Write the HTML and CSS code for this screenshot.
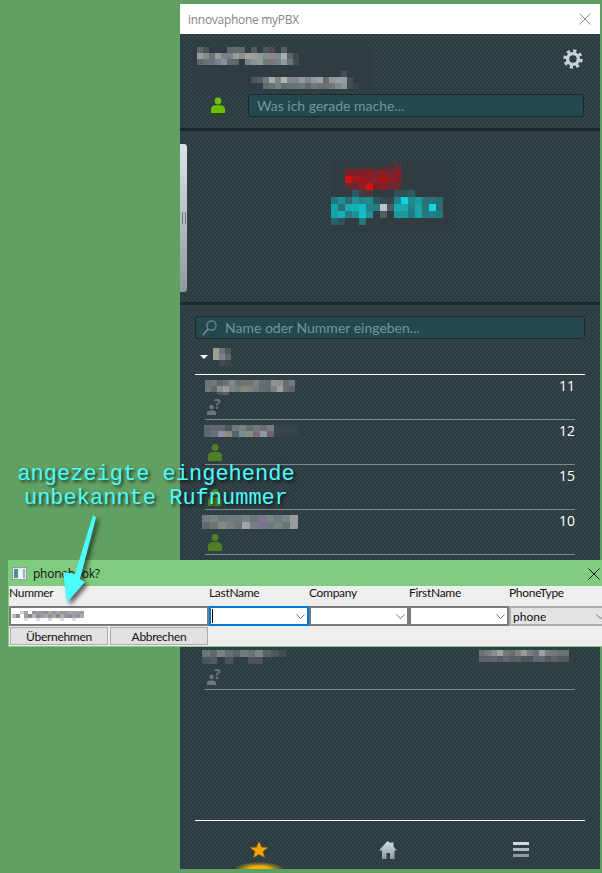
FILE: index.html
```html
<!DOCTYPE html>
<html lang="de">
<head>
<meta charset="utf-8">
<title>innovaphone myPBX</title>
<link rel="stylesheet" href="styles.css">
</head>
<body>
<main class="window">
  <div class="titlebar">
    <span class="title">innovaphone myPBX</span>
    <svg class="close" width="12" height="12" viewBox="0 0 12 12"><path d="M.5.5l11 11M11.5.5l-11 11" stroke="#8a8a8a" fill="none"/></svg>
  </div>

  <section class="profile">
    <div class="profile-top">
      <svg class="mosaic profile-name" width="180" height="43" viewBox="0 0 30 7.17">
        <rect class="back" x=".2" width="29.8" height="7.17" fill="#303c41"/>
        <rect x="1" y="0" fill="#5d666a"/><rect x="2" y="0" fill="#4a5559"/><rect x="6" y="0" fill="#5f696c"/><rect x="7" y="0" fill="#636b6e"/><rect x="8" y="0" fill="#606a6c"/><rect x="10" y="0" fill="#515b5f"/><rect x="12" y="0" fill="#4a5a60"/><rect x="13" y="0" fill="#544a4e"/><rect x="15" y="0" fill="#555e62"/>
        <rect x="1" y="1" fill="#9a9c9d"/><rect x="2" y="1" fill="#858a8c"/><rect x="3" y="1" fill="#6b7477"/><rect x="4" y="1" fill="#9c9a94"/><rect x="5" y="1" fill="#7a8092"/><rect x="6" y="1" fill="#78807e"/><rect x="7" y="1" fill="#9a9d9b"/><rect x="8" y="1" fill="#8b8e8c"/><rect x="9" y="1" fill="#a0a3a1"/><rect x="10" y="1" fill="#9aa19c"/><rect x="11" y="1" fill="#8f9894"/><rect x="12" y="1" fill="#808e92"/><rect x="13" y="1" fill="#8d8589"/><rect x="14" y="1" fill="#7f8a8c"/><rect x="15" y="1" fill="#a5b0b4"/><rect x="16" y="1" fill="#5b6467"/><rect x="17" y="1" fill="#3f4a4d"/>
        <rect x="1" y="2" fill="#5f6868"/><rect x="2" y="2" fill="#6d7072"/><rect x="3" y="2" fill="#68737c"/><rect x="4" y="2" fill="#7a8190"/><rect x="5" y="2" fill="#8a8f9a"/><rect x="6" y="2" fill="#62696a"/><rect x="7" y="2" fill="#5e6566"/><rect x="9" y="2" fill="#7d8485"/><rect x="10" y="2" fill="#8c9394"/><rect x="11" y="2" fill="#8f9893"/><rect x="12" y="2" fill="#70797c"/><rect x="13" y="2" fill="#79787a"/><rect x="14" y="2" fill="#788284"/><rect x="15" y="2" fill="#8d9b9a"/><rect x="16" y="2" fill="#6b7577"/><rect x="17" y="2" fill="#434c4e"/>
        <rect x="25" y="4" fill="#434f52"/>
        <rect x="10" y="5" fill="#4a5558"/><rect x="11" y="5" fill="#556064"/><rect x="12" y="5" fill="#6f7a7c"/><rect x="13" y="5" fill="#a8adab"/><rect x="14" y="5" fill="#7e8687"/><rect x="15" y="5" fill="#b0b5b0"/><rect x="16" y="5" fill="#86888c"/><rect x="17" y="5" fill="#7f8790"/><rect x="18" y="5" fill="#97999a"/><rect x="19" y="5" fill="#7e8890"/><rect x="20" y="5" fill="#8f9a9a"/><rect x="21" y="5" fill="#a0a2a2"/><rect x="22" y="5" fill="#676b66"/><rect x="23" y="5" fill="#8a9a9e"/><rect x="24" y="5" fill="#9aa0a2"/><rect x="25" y="5" fill="#90a0a0"/><rect x="26" y="5" fill="#444c50"/>
        <rect x="12" y="6" fill="#5e6a6d"/><rect x="13" y="6" fill="#6a7376"/><rect x="14" y="6" fill="#79817d"/><rect x="15" y="6" fill="#626e72"/><rect x="16" y="6" fill="#6a7274"/><rect x="17" y="6" fill="#66717a"/><rect x="18" y="6" fill="#6f7674"/><rect x="19" y="6" fill="#5e696c"/><rect x="20" y="6" fill="#72787a"/><rect x="21" y="6" fill="#6a7276"/><rect x="22" y="6" fill="#687072"/><rect x="23" y="6" fill="#70787a"/><rect x="24" y="6" fill="#808a8c"/><rect x="25" y="6" fill="#88969c"/><rect x="26" y="6" fill="#434b4f"/><rect x="27" y="6" fill="#3c4246"/>
      </svg>
      <svg class="gear" width="20" height="20" viewBox="0 0 20 20"><circle cx="10" cy="10" r="8" fill="none" stroke="#c9d2d5" stroke-width="3.4" stroke-dasharray="3.1 3.18"/><circle cx="10" cy="10" r="5.4" fill="none" stroke="#c9d2d5" stroke-width="3.4"/></svg>
    </div>
    <div class="status-row">
      <svg class="status-user" width="14" height="18" viewBox="0 0 14 18"><circle cx="7" cy="4" r="3.4" fill="#6cc000"/><path d="M0 17v-5c0-2 2-3.800 4-3.800h6c2 0 4 1.800 4 3.800v5z" fill="#6cc000"/><rect y="16" width="14" height="2" fill="#2d4a00"/></svg>
      <div class="field status-field">Was ich gerade mache...</div>
    </div>
  </section>

  <section class="stage">
    <div class="handle"><span class="grip"></span></div>
    <svg class="mosaic stage-logo" width="119" height="70" viewBox="0 0 17 10">
      <rect class="back" width="17" height="10" fill="#303c41"/>
      <rect x="8" y="0" fill="#45353a"/><rect x="9" y="0" fill="#55333a"/>
      <rect x="2" y="1" fill="#7e1f26"/><rect x="3" y="1" fill="#7a2028"/><rect x="4" y="1" fill="#7e1f26"/><rect x="5" y="1" fill="#8c1c22"/><rect x="6" y="1" fill="#702832"/><rect x="7" y="1" fill="#951a20"/><rect x="8" y="1" fill="#6a2a32"/><rect x="9" y="1" fill="#8a1c24"/>
      <rect x="2" y="2" fill="#d01212"/><rect x="3" y="2" fill="#9a1a20"/><rect x="4" y="2" fill="#a0181e"/><rect x="5" y="2" fill="#86202a"/><rect x="6" y="2" fill="#8a2028"/><rect x="7" y="2" fill="#a81618"/><rect x="8" y="2" fill="#8a2028"/><rect x="9" y="2" fill="#7e222a"/>
      <rect x="2" y="3" fill="#5f2c34"/><rect x="3" y="3" fill="#66282f"/><rect x="4" y="3" fill="#8a2026"/><rect x="5" y="3" fill="#d81010"/><rect x="6" y="3" fill="#7a2028"/><rect x="7" y="3" fill="#8a1e24"/><rect x="8" y="3" fill="#6a2a30"/><rect x="9" y="3" fill="#6a2a30"/>
      <rect x="3" y="4" fill="#2a5a62"/><rect x="4" y="4" fill="#45383e"/><rect x="5" y="4" fill="#4a363c"/><rect x="9" y="4" fill="#2c5459"/><rect x="10" y="4" fill="#2c5459"/><rect x="11" y="4" fill="#2e5a60"/>
      <rect x="0" y="5" fill="#1f7a80"/><rect x="1" y="5" fill="#1e9096"/><rect x="2" y="5" fill="#2c6a70"/><rect x="3" y="5" fill="#1e9096"/><rect x="4" y="5" fill="#1f8288"/><rect x="5" y="5" fill="#218a8e"/><rect x="6" y="5" fill="#2a5a60"/><rect x="7" y="5" fill="#344a50"/><rect x="8" y="5" fill="#34464c"/><rect x="9" y="5" fill="#1f8086"/><rect x="10" y="5" fill="#12d4dc"/><rect x="11" y="5" fill="#1f8a90"/><rect x="12" y="5" fill="#1a9aa0"/><rect x="13" y="5" fill="#26747a"/><rect x="14" y="5" fill="#26747a"/><rect x="15" y="5" fill="#1f7076"/>
      <rect x="0" y="6" fill="#16a4aa"/><rect x="1" y="6" fill="#2c6e74"/><rect x="2" y="6" fill="#18acb2"/><rect x="3" y="6" fill="#16b0b6"/><rect x="4" y="6" fill="#14bcc2"/><rect x="5" y="6" fill="#228288"/><rect x="6" y="6" fill="#267c82"/><rect x="7" y="6" fill="#c0c4c5"/><rect x="8" y="6" fill="#4a5a60"/><rect x="9" y="6" fill="#16acb2"/><rect x="10" y="6" fill="#18a8ae"/><rect x="11" y="6" fill="#228288"/><rect x="12" y="6" fill="#18a4aa"/><rect x="13" y="6" fill="#28747a"/><rect x="14" y="6" fill="#10d8e0"/><rect x="15" y="6" fill="#2a6a70"/>
      <rect x="0" y="7" fill="#18a0a6"/><rect x="1" y="7" fill="#18b0b6"/><rect x="2" y="7" fill="#227c82"/><rect x="3" y="7" fill="#1a9298"/><rect x="4" y="7" fill="#14c0c6"/><rect x="5" y="7" fill="#1e9298"/><rect x="7" y="7" fill="#505e64"/><rect x="9" y="7" fill="#1a9aa0"/><rect x="10" y="7" fill="#1a9aa0"/><rect x="11" y="7" fill="#207a80"/><rect x="12" y="7" fill="#18a4aa"/><rect x="13" y="7" fill="#207a80"/><rect x="14" y="7" fill="#1e8086"/><rect x="15" y="7" fill="#1f7a80"/>
      <rect x="0" y="8" fill="#24666c"/><rect x="1" y="8" fill="#2c5459"/><rect x="4" y="8" fill="#1f7a80"/>
    </svg>
  </section>

  <section class="contacts">
    <div class="field search-field">
      <svg width="15" height="16" viewBox="0 0 15 16"><circle cx="9.500" cy="5.500" r="4.600" fill="none" stroke="#6f8f93" stroke-width="1.200"/><path d="M6 9L1 15" stroke="#6f8f93" stroke-width="1.800"/></svg>
      <span>Name oder Nummer eingeben...</span>
    </div>
    <div class="group">
      <span class="caret"></span>
      <svg class="mosaic" width="19" height="18" viewBox="0 0 3 3"><rect x="0" y="0" fill="#9a9c90"/><rect x="1" y="0" fill="#6c7478"/><rect x="2" y="0" fill="#4e5a5a"/><rect x="0" y="1" fill="#9aa098"/><rect x="1" y="1" fill="#7a8288"/><rect x="2" y="1" fill="#60686a"/><rect x="1" y="2" fill="#3e4a50"/><rect x="2" y="2" fill="#384448"/></svg>
    </div>
    <ul class="rows">
      <li class="row">
        <div class="row-top"><svg class="mosaic" width="90" height="15" viewBox="0 0 15 2.500"><rect x="0" y="0" fill="#6a7478"/><rect x="1" y="0" fill="#727a78"/><rect x="2" y="0" fill="#60686c"/><rect x="3" y="0" fill="#6d7478"/><rect x="4" y="0" fill="#7a8a8e"/><rect x="5" y="0" fill="#6a7270"/><rect x="6" y="0" fill="#6e726e"/><rect x="7" y="0" fill="#6a7472"/><rect x="8" y="0" fill="#7a827a"/><rect x="9" y="0" fill="#62706e"/><rect x="10" y="0" fill="#606c70"/><rect x="11" y="0" fill="#8c9494"/><rect x="12" y="0" fill="#8a9090"/><rect x="13" y="0" fill="#686c70"/><rect x="14" y="0" fill="#707a7c"/><rect x="0" y="1" fill="#72787a"/><rect x="1" y="1" fill="#62686a"/><rect x="2" y="1" fill="#8a8c90"/><rect x="3" y="1" fill="#9a9a9a"/><rect x="4" y="1" fill="#7a8686"/><rect x="5" y="1" fill="#747e80"/><rect x="6" y="1" fill="#8a867a"/><rect x="7" y="1" fill="#7a8480"/><rect x="8" y="1" fill="#747a78"/><rect x="9" y="1" fill="#647076"/><rect x="10" y="1" fill="#606a70"/><rect x="11" y="1" fill="#7c8286"/><rect x="12" y="1" fill="#9aa0a0"/><rect x="13" y="1" fill="#706a72"/><rect x="14" y="1" fill="#5c666a"/><rect x="2" y="2" fill="#4a5458"/><rect x="3" y="2" fill="#5a5e62"/></svg><span class="num">11</span></div>
        <svg class="unknown" width="18" height="17" viewBox="0 0 18 17"><circle cx="4.500" cy="9" r="2.200" fill="#6e777b"/><path d="M0 17v-2c0-1.500 1.500-2.500 3-2.500h3c1.500 0 3 1 3 2.500v2z" fill="#6e777b"/><text x="7" y="11" class="q">?</text></svg>
      </li>
      <li class="row">
        <div class="row-top"><svg class="mosaic shift-1" width="95" height="12" viewBox="0 0 13.570 2" preserveAspectRatio="none"><rect class="back" x="10" width="3.570" height="2" fill="#36444a"/><rect x="0" y="0" fill="#5c656a"/><rect x="1" y="0" fill="#626a6e"/><rect x="2" y="0" fill="#60696e"/><rect x="3" y="0" fill="#4e5658"/><rect x="4" y="0" fill="#70777a"/><rect x="5" y="0" fill="#7a7f7a"/><rect x="6" y="0" fill="#656d72"/><rect x="7" y="0" fill="#757a7a"/><rect x="8" y="0" fill="#6a6e72"/><rect x="9" y="0" fill="#787e82"/><rect x="0" y="1" fill="#5c6670"/><rect x="1" y="1" fill="#6a7078"/><rect x="2" y="1" fill="#8e8ea4"/><rect x="3" y="1" fill="#8a8a7c"/><rect x="4" y="1" fill="#566470"/><rect x="5" y="1" fill="#7a8a90"/><rect x="6" y="1" fill="#8c8c80"/><rect x="7" y="1" fill="#7a6e7a"/><rect x="8" y="1" fill="#8c9aa2"/><rect x="9" y="1" fill="#6e6070"/></svg><span class="num">12</span></div>
        <svg class="contact-user" width="14" height="17" viewBox="0 0 14 17"><circle cx="7" cy="3.500" r="3.400" fill="#4f7f26"/><path d="M0 17v-5c0-2 2-4 4-4h6c2 0 4 2 4 4v5z" fill="#4f7f26"/></svg>
      </li>
      <li class="row">
        <div class="row-top"><span class="row-name-gap"></span><span class="num">15</span></div>
        <svg class="contact-user" width="14" height="17" viewBox="0 0 14 17"><circle cx="7" cy="3.500" r="3.400" fill="#4f7f26"/><path d="M0 17v-5c0-2 2-4 4-4h6c2 0 4 2 4 4v5z" fill="#4f7f26"/></svg>
      </li>
      <li class="row">
        <div class="row-top"><svg class="mosaic shift" width="96" height="16" viewBox="0 0 12 2.290" preserveAspectRatio="none"><rect x="0" y="0" fill="#727a7e"/><rect x="1" y="0" fill="#7a8284"/><rect x="2" y="0" fill="#6e7678"/><rect x="3" y="0" fill="#707a80"/><rect x="4" y="0" fill="#6c7a82"/><rect x="5" y="0" fill="#7a8084"/><rect x="6" y="0" fill="#6a7678"/><rect x="7" y="0" fill="#7e7490"/><rect x="8" y="0" fill="#7a8480"/><rect x="9" y="0" fill="#6a7a86"/><rect x="10" y="0" fill="#7a8884"/><rect x="11" y="0" fill="#989c9a"/><rect x="0" y="1" fill="#62686c"/><rect x="1" y="1" fill="#6e7478"/><rect x="2" y="1" fill="#828a8a"/><rect x="3" y="1" fill="#78807c"/><rect x="4" y="1" fill="#6c7478"/><rect x="5" y="1" fill="#a0a4a4"/><rect x="6" y="1" fill="#7a7e88"/><rect x="7" y="1" fill="#7a7490"/><rect x="8" y="1" fill="#6c7a82"/><rect x="9" y="1" fill="#78827e"/><rect x="10" y="1" fill="#6a7478"/><rect x="11" y="1" fill="#9a9c9a"/></svg><span class="num">10</span></div>
        <svg class="contact-user" width="14" height="17" viewBox="0 0 14 17"><circle cx="7" cy="3.500" r="3.400" fill="#4f7f26"/><path d="M0 17v-5c0-2 2-4 4-4h6c2 0 4 2 4 4v5z" fill="#4f7f26"/></svg>
      </li>
      <li class="row"></li>
      <li class="row"></li>
      <li class="row">
        <div class="row-top"><svg class="mosaic shift" width="84" height="14" viewBox="0 0 11 2" preserveAspectRatio="none"><rect x="0" y="0" fill="#6e767a"/><rect x="1" y="0" fill="#5e686c"/><rect x="2" y="0" fill="#7a8284"/><rect x="3" y="0" fill="#667074"/><rect x="4" y="0" fill="#5c666a"/><rect x="5" y="0" fill="#707a7a"/><rect x="6" y="0" fill="#6a7276"/><rect x="7" y="0" fill="#7e8486"/><rect x="8" y="0" fill="#5a6468"/><rect x="9" y="0" fill="#4e585c"/><rect x="10" y="0" fill="#404e52"/><rect x="0" y="1" fill="#4a5458"/><rect x="1" y="1" fill="#525c60"/><rect x="3" y="1" fill="#4c565a"/><rect x="6" y="1" fill="#4a5458"/><rect x="7" y="1" fill="#4a5458"/></svg><svg class="mosaic" width="102" height="17" viewBox="0 0 17 2.830"><rect class="back" width="17" height="2.830" fill="#323f44"/><rect x="1" y="0" fill="#6a7478"/><rect x="2" y="0" fill="#767e80"/><rect x="3" y="0" fill="#868c8a"/><rect x="4" y="0" fill="#a0a4a0"/><rect x="5" y="0" fill="#727a7e"/><rect x="6" y="0" fill="#6a706c"/><rect x="7" y="0" fill="#7a8284"/><rect x="8" y="0" fill="#98988e"/><rect x="9" y="0" fill="#7a7a86"/><rect x="10" y="0" fill="#6a7278"/><rect x="11" y="0" fill="#98a2a4"/><rect x="12" y="0" fill="#7a8080"/><rect x="13" y="0" fill="#72787a"/><rect x="14" y="0" fill="#6a7274"/><rect x="15" y="0" fill="#6a7274"/><rect x="1" y="1" fill="#5a6468"/><rect x="2" y="1" fill="#5a6266"/><rect x="3" y="1" fill="#5e686a"/><rect x="4" y="1" fill="#566064"/><rect x="5" y="1" fill="#606a6e"/><rect x="6" y="1" fill="#565e60"/><rect x="7" y="1" fill="#5a6264"/><rect x="8" y="1" fill="#4c585c"/><rect x="9" y="1" fill="#4a565a"/><rect x="10" y="1" fill="#60686e"/><rect x="11" y="1" fill="#626c70"/><rect x="12" y="1" fill="#525c60"/><rect x="13" y="1" fill="#5a6264"/><rect x="14" y="1" fill="#525a5c"/><rect x="15" y="1" fill="#525a5c"/></svg></div>
        <svg class="unknown" width="18" height="17" viewBox="0 0 18 17"><circle cx="4.500" cy="9" r="2.200" fill="#6e777b"/><path d="M0 17v-2c0-1.500 1.500-2.500 3-2.500h3c1.500 0 3 1 3 2.500v2z" fill="#6e777b"/><text x="7" y="11" class="q">?</text></svg>
      </li>
    </ul>
    <nav class="tabs">
      <div class="tab tab-active">
        <svg width="18" height="17" viewBox="0 0 20 18"><path d="M10 0l2.700 6.400 7 .5-5.400 4.400 1.800 6.700L10 14.300 3.900 18l1.800-6.700L.3 6.900l7-.5z" fill="#f7a400" stroke="#a87000" stroke-width=".5"/></svg>
      </div>
      <div class="tab">
        <svg width="18" height="18" viewBox="0 0 18 18"><defs><linearGradient id="metal" x1="0" y1="0" x2="0" y2="1"><stop offset="0" stop-color="#d3dde0"/><stop offset="1" stop-color="#8d989b"/></linearGradient></defs><path d="M0 9.500L8 .5h1.500l2 2V1.500h3v4.200L18 9.500h-2.500V18h-4.500v-6H7.500v6H3V9.500z" fill="url(#metal)"/></svg>
      </div>
      <div class="tab">
        <div class="burger"><span class="bar bar-1"></span><span class="bar bar-2"></span><span class="bar bar-3"></span></div>
      </div>
    </nav>
  </section>
</main>

<aside class="dialog">
  <header class="dialog-title">
    <svg width="15" height="13" viewBox="0 0 15 13"><rect x=".5" y=".5" width="14" height="12" fill="#e8eef0" stroke="#8f9ca0"/><rect x="2" y="2" width="4" height="9" fill="#4a8f9a"/><rect x="7" y="2" width="3" height="9" fill="#f4f6f6"/><rect x="11" y="2" width="2" height="9" fill="#8fb8c0"/></svg>
    <span class="dialog-name">phonebook?</span>
    <svg class="dialog-close" width="12" height="12" viewBox="0 0 12 12"><path d="M.5.500l11 11M11.500.500l-11 11" stroke="#111" fill="none"/></svg>
  </header>
  <div class="form">
    <span class="label">Nummer</span><span class="label">LastName</span><span class="label">Company</span><span class="label">FirstName</span><span class="label">PhoneType</span>
    <div class="input">
      <svg class="mosaic" width="72" height="10" viewBox="0 0 18 3" preserveAspectRatio="none"><rect x="0" y="1" fill="#bdb6b2"/><rect x="1" y="1" fill="#8f8a90"/><rect x="2" y="0" fill="#cfcad0"/><rect x="3" y="0" fill="#98a8ae"/><rect x="3" y="1" fill="#a89ea8"/><rect x="4" y="1" fill="#8e8484"/><rect x="5" y="0" fill="#909aa4"/><rect x="5" y="1" fill="#b4b4c0"/><rect x="6" y="0" fill="#a89aa0"/><rect x="6" y="1" fill="#90909c"/><rect x="7" y="0" fill="#9a94a4"/><rect x="7" y="1" fill="#a49a84"/><rect x="8" y="0" fill="#8890a0"/><rect x="8" y="1" fill="#acacb8"/><rect x="9" y="0" fill="#b4aa94"/><rect x="9" y="1" fill="#9094a4"/><rect x="10" y="0" fill="#9c90a4"/><rect x="10" y="1" fill="#aca49a"/><rect x="11" y="0" fill="#a0a4b4"/><rect x="11" y="1" fill="#88888f"/><rect x="12" y="0" fill="#989890"/><rect x="12" y="1" fill="#acacb8"/><rect x="13" y="0" fill="#a09098"/><rect x="13" y="1" fill="#90989a"/><rect x="14" y="0" fill="#a8a4b4"/><rect x="14" y="1" fill="#90889c"/><rect x="15" y="0" fill="#98a2a2"/><rect x="15" y="1" fill="#a0a0ac"/><rect x="16" y="0" fill="#a4a0aa"/><rect x="16" y="1" fill="#90949a"/><rect x="17" y="0" fill="#9898a4"/><rect x="17" y="1" fill="#a4acb0"/><rect x="3" y="2" fill="#dedcdc"/><rect x="6" y="2" fill="#dcdce0"/><rect x="9" y="2" fill="#d8d8dc"/><rect x="12" y="2" fill="#dcd8dc"/><rect x="15" y="2" fill="#dcdce0"/></svg>
    </div>
    <div class="input combo focused"><span class="cursor"></span><svg class="chev" width="9" height="5" viewBox="0 0 11 6"><path d="M.5.500l5 5 5-5" stroke="#555" fill="none"/></svg></div>
    <div class="input combo"><svg class="chev" width="9" height="5" viewBox="0 0 11 6"><path d="M.5.500l5 5 5-5" stroke="#555" fill="none"/></svg></div>
    <div class="input combo"><svg class="chev" width="9" height="5" viewBox="0 0 11 6"><path d="M.5.500l5 5 5-5" stroke="#555" fill="none"/></svg></div>
    <div class="input combo readonly"><span>phone</span><svg class="chev" width="9" height="5" viewBox="0 0 11 6"><path d="M.5.500l5 5 5-5" stroke="#555" fill="none"/></svg></div>
    <div class="actions">
      <button class="btn" type="button">Übernehmen</button>
      <button class="btn" type="button">Abbrechen</button>
    </div>
  </div>
</aside>

<div class="note">angezeigte eingehende<br>unbekannte Rufnummer</div>
<svg class="arrow" width="60" height="110" viewBox="0 0 60 110"><path d="M46 0l3 2.500L33 64l5 3L20 87.500 16 57l12 2z" fill="#4dfcfc"/></svg>
</body>
</html>
```
FILE: styles.css
```css
* { box-sizing: border-box; }
html, body { margin: 0; height: 100%; }
body {
  position: relative;
  width: 602px;
  height: 873px;
  overflow: hidden;
  background: #619f62;
  font-family: "Open Sans", "Liberation Sans", sans-serif;
}
ul { list-style: none; margin: 0; padding: 0; }
svg { display: block; flex: none; }
.mosaic { shape-rendering: crispEdges; }
.mosaic rect:not(.back) { width: 1px; height: 1px; }

.window {
  width: 420px;
  height: 865px;
  margin: 0 0 0 180px;
  position: relative;
  top: 4px;
  display: flex;
  flex-direction: column;
  color: #fff;
  background-color: #2f3e43;
  background-image: repeating-conic-gradient(#2c3b40 0 25%, #33434a 0 50%);
  background-size: 4px 4px;
}
.titlebar {
  height: 30px;
  flex: none;
  background: #fff;
  display: flex;
  align-items: center;
  justify-content: space-between;
  padding: 0 9px 0 8px;
}
.title { font-size: 12px; color: #858585; letter-spacing: -.29px; }

.profile {
  height: 97px;
  flex: none;
  border-bottom: 3px solid #1c282d;
  padding: 13px 16px 0 11px;
}
.profile-top { display: flex; justify-content: space-between; }
.gear { margin-top: 2px; margin-right: 1px; }
.status-row { display: flex; align-items: center; margin-top: 4px; padding-left: 20px; }
.status-user { margin-right: 23px; }
.field {
  height: 23px;
  display: flex;
  align-items: center;
  background: #25474e;
  border: 1px solid #1a2a2f;
  border-radius: 3px;
  color: #7496a0;
  font-family: Lato, sans-serif;
  font-size: 14px;
}
.status-field { flex: 1; padding-left: 8px; }

.stage {
  height: 174px;
  flex: none;
  position: relative;
  border-bottom: 3px solid #1c282d;
  display: flex;
  justify-content: center;
  padding-top: 31px;
}
.handle {
  position: absolute;
  left: 0;
  top: 13px;
  width: 7px;
  height: 148px;
  border-radius: 0 3px 3px 0;
  background: linear-gradient(#dbe6ea, #8e999b);
}
.grip {
  position: absolute;
  left: 2px;
  top: 68px;
  width: 4px;
  height: 12px;
  border-left: 1px solid #6e7779;
  border-right: 1px solid #6e7779;
}

.contacts { flex: 1; padding: 11px 15px 0; display: flex; flex-direction: column; min-height: 0; }
.search-field { gap: 8px; padding-left: 6px; flex: none; }
.group {
  height: 36px;
  flex: none;
  display: flex;
  align-items: center;
  gap: 4px;
  padding: 0 0 1px 5px;
  border-bottom: 1px solid #fff;
}
.group .mosaic { margin-top: 2px; }
.caret {
  width: 0;
  height: 0;
  border: 4px solid transparent;
  border-top-color: #fff;
  border-bottom: 0;
  margin-top: 2px;
}
.rows { padding: 0 10px; flex: none; }
.row {
  height: 45px;
  border-bottom: 1px solid #7d898d;
  padding-top: 5px;
}
.row-top { display: flex; justify-content: space-between; height: 17px; align-items: flex-start; }
.row-name-gap { width: 90px; }
.shift { margin-left: -3px; }
.shift-1 { margin-left: -1px; }
.num { font-size: 14px; font-weight: 500; line-height: 15px; margin-top: -2px; }
.unknown { margin: 1px 0 0 2px; overflow: visible; }
.contact-user { margin: 2px 0 0 3px; }
.q { font: 700 14px "Open Sans", sans-serif; fill: #6e777b; }

.tabs {
  margin-top: auto;
  height: 49px;
  flex: none;
  border-top: 1px solid #fff;
  display: grid;
  grid-template-columns: 128px 130px 136px;
  padding-top: 20px;
}
.tab { display: flex; justify-content: center; }
.tab-active { position: relative; }
.tab-active::after {
  content: "";
  position: absolute;
  left: 39px;
  bottom: 0;
  width: 50px;
  height: 7px;
  background: radial-gradient(ellipse 50% 100% at 50% 100%, #f7b500 35%, rgba(247, 181, 0, 0) 100%);
}
.burger { width: 16px; display: flex; flex-direction: column; gap: 3px; margin-top: 1px; }
.bar { height: 3px; }
.bar-1 { background: #d2dcdf; }
.bar-2 { background: #b1bcbf; }
.bar-3 { background: #8f9a9d; }

.dialog {
  position: absolute;
  left: 8px;
  top: 560px;
  width: 594px;
  height: 87px;
  overflow: hidden;
  background: #eeeeee;
  border: 1px solid #7fcb7f;
  border-right: 0;
}
.dialog-title {
  height: 25px;
  background: #7fcb7f;
  display: flex;
  align-items: center;
  padding: 0 2px 0 3px;
  gap: 6px;
}
.dialog-name { font: 12px "Open Sans", sans-serif; color: #111; flex: 1; letter-spacing: -.25px; }
.form {
  display: grid;
  grid-template-columns: 200px 100px 100px 100px 100px;
  grid-template-rows: 20px 21px 19px;
  font-family: Lato, sans-serif;
  color: #111;
}
.label { font-size: 12px; letter-spacing: -.3px; line-height: 14px; }
.input {
  border: 1px solid #7a7a7a;
  outline: 1px solid #7a7a7a;
  outline-offset: -2px;
  background: #fff;
  display: flex;
  align-items: center;
  padding-left: 2px;
  position: relative;
  height: 20px;
}
.combo { justify-content: flex-end; padding-right: 3px; }
.focused { border-color: #0078d7; outline-color: #0078d7; }
.cursor {
  position: absolute;
  left: 2px;
  top: 2px;
  width: 1px;
  height: 14px;
  background: #000;
}
.readonly { background: #e3e3e3; justify-content: space-between; border-color: #adadad; outline-color: #adadad; font-size: 12px; padding-left: 3px; }
.actions { grid-column: 1; display: flex; gap: 2px; padding-left: 1px; }
.btn {
  height: 18px;
  width: 98px;
  margin: 0;
  padding: 0;
  background: #e1e1e1;
  border: 1px solid #adadad;
  font: 12px Lato, sans-serif;
  letter-spacing: -.3px;
  color: #111;
}
.note {
  position: absolute;
  left: 0;
  top: 463px;
  width: 312px;
  text-align: center;
  font: 22px/24px "Liberation Mono", monospace;
  color: #4dfcfc;
  text-shadow: 2px 2px 3px rgba(0, 0, 0, .65);
}
.arrow {
  position: absolute;
  left: 47px;
  top: 515px;
  filter: drop-shadow(3px 3px 2px rgba(0, 0, 0, .6));
}
```
